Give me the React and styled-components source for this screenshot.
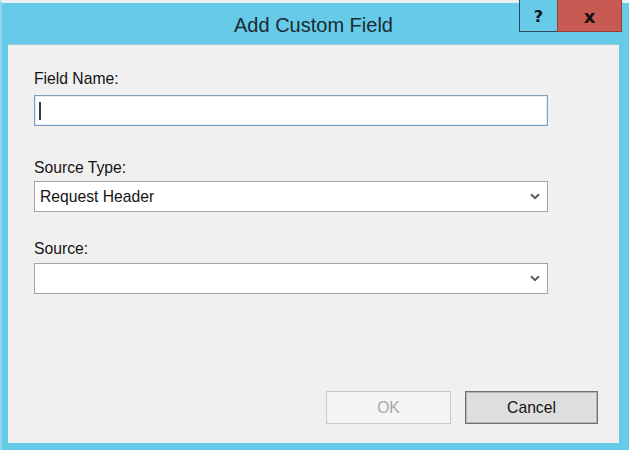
import React from 'react';
import styled, { createGlobalStyle } from 'styled-components';

const GlobalStyle = createGlobalStyle`
  html, body {
    margin: 0;
    padding: 0;
    background: #ffffff;
  }
  body {
    font-family: "Liberation Sans", Arial, sans-serif;
  }
`;

const Window = styled.div`
  box-sizing: border-box;
  width: 629px;
  height: 450px;
  display: flex;
  flex-direction: column;
  background: #66cbe9;
  border-top: 3px solid #e9eef0;
  border-left: 2px solid #8fd6ec;
  padding: 0 10px 7px 6px;
`;

const TitleBar = styled.div`
  height: 41px;
  display: grid;
  grid-template-columns: 1fr auto 1fr;
  align-items: start;
`;

const Title = styled.div`
  grid-column: 2;
  font-size: 20px;
  line-height: 24px;
  color: #1c2a30;
  margin-top: 10px;
`;

const Controls = styled.div`
  grid-column: 3;
  justify-self: end;
  display: flex;
  margin-top: -3px;
  margin-right: -3px;
`;

const CaptionButton = styled.div`
  box-sizing: border-box;
  width: ${({ $wide }) => ($wide ? '65px' : '38px')};
  height: 32px;
  display: flex;
  align-items: center;
  justify-content: center;
  padding-top: 1px;
  font-family: "DejaVu Sans", sans-serif;
  font-weight: bold;
  font-size: ${({ $wide }) => ($wide ? '18px' : '16px')};
  color: #111;
  background: ${({ $danger }) => ($danger ? '#c75a52' : '#66cbe9')};
  border-left: 1px solid ${({ $danger }) => ($danger ? '#9a3c36' : '#2d4b56')};
  border-bottom: 1px solid ${({ $danger }) => ($danger ? '#9a3c36' : '#2d4b56')};
  border-right: ${({ $danger }) => ($danger ? '1px solid #9a3c36' : 'none')};
`;

const Content = styled.div`
  flex: 1;
  box-sizing: border-box;
  display: flex;
  flex-direction: column;
  background: #f0f0f0;
  border-top: 1px solid #9fc6d6;
  padding: 25px 21px 19px 26px;
`;

const Group = styled.div`
  display: flex;
  flex-direction: column;
  margin-top: ${({ $top }) => $top || 0}px;
`;

const Label = styled.div`
  font-size: 15.7px;
  line-height: 18px;
  color: #141414;
  margin-bottom: ${({ $gap }) => $gap}px;
`;

const TextBox = styled.div`
  box-sizing: border-box;
  width: 514px;
  height: 31px;
  background: #ffffff;
  border: 1px solid #7a9dc0;
  box-shadow: inset 0 0 0 1px #e4edf6;
  display: flex;
  align-items: center;
  padding-left: 4px;
`;

const Caret = styled.span`
  display: block;
  width: 2px;
  height: 18px;
  background: #3a3a3a;
`;

const Select = styled.div`
  box-sizing: border-box;
  width: 514px;
  height: 31px;
  background: #ffffff;
  border: 1px solid #a4a4a4;
  display: flex;
  align-items: center;
  justify-content: space-between;
  padding: 0 7px 0 5px;
  font-size: 15.7px;
  color: #141414;
`;

const Chevron = () => (
  <svg width="10" height="7" viewBox="0 0 10 7">
    <path d="M1 1.2 L5 5.2 L9 1.2" fill="none" stroke="#5a5a5a" strokeWidth="2" />
  </svg>
);

const Footer = styled.div`
  margin-top: auto;
  display: flex;
  justify-content: flex-end;
  gap: 14px;
`;

const Button = styled.div`
  box-sizing: border-box;
  width: ${({ $w }) => $w}px;
  height: 33px;
  display: flex;
  align-items: center;
  justify-content: center;
  font-size: 15.7px;
  color: ${({ $disabled }) => ($disabled ? '#a9a9a9' : '#141414')};
  background: ${({ $disabled }) => ($disabled ? '#f4f4f4' : '#dedede')};
  border: 1px solid ${({ $disabled }) => ($disabled ? '#c9c9c9' : '#707070')};
  box-shadow: ${({ $disabled }) => ($disabled ? 'none' : 'inset 0 0 0 1px #b5b5b5')};
`;

const App = () => {
  return (
    <>
      <GlobalStyle />
      <Window>
        <TitleBar>
          <Title>Add Custom Field</Title>
          <Controls>
            <CaptionButton>?</CaptionButton>
            <CaptionButton $wide $danger>x</CaptionButton>
          </Controls>
        </TitleBar>
        <Content>
          <Group>
            <Label $gap={7}>Field Name:</Label>
            <TextBox>
              <Caret />
            </TextBox>
          </Group>
          <Group $top={33}>
            <Label $gap={4}>Source Type:</Label>
            <Select>
              <span>Request Header</span>
              <Chevron />
            </Select>
          </Group>
          <Group $top={28}>
            <Label $gap={5}>Source:</Label>
            <Select>
              <span />
              <Chevron />
            </Select>
          </Group>
          <Footer>
            <Button $w={125} $disabled>OK</Button>
            <Button $w={133}>Cancel</Button>
          </Footer>
        </Content>
      </Window>
    </>
  );
};

export default App;
